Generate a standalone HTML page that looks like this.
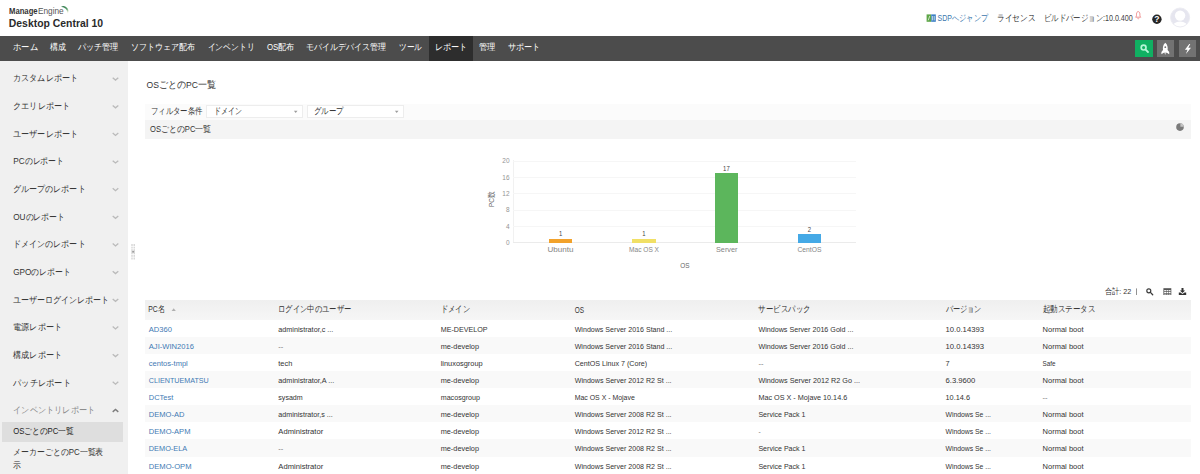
<!DOCTYPE html>
<html lang="ja"><head><meta charset="utf-8"><title>Desktop Central 10</title>
<style>
*{box-sizing:border-box;margin:0;padding:0}
html,body{width:1200px;height:474px;overflow:hidden;background:#fff}
body{font-family:"Liberation Sans",sans-serif;position:relative}
.b{position:absolute}
svg text{font-family:"Liberation Sans",sans-serif;white-space:pre}
</style></head><body>
<!-- nav bar -->
<div class="b" style="left:0;top:36px;width:1200px;height:24.7px;background:#4c4c4c"></div>
<div class="b" style="left:429px;top:36px;width:44px;height:24.7px;background:#2d2d2d"></div>
<div class="b" style="left:1135px;top:40px;width:18px;height:17px;background:#10b062"></div>
<div class="b" style="left:1157px;top:40px;width:17px;height:17px;background:#727272"></div>
<div class="b" style="left:1179px;top:40px;width:17px;height:17px;background:#727272"></div>
<!-- sidebar -->
<div class="b" style="left:0;top:60.7px;width:128px;height:414px;background:#f0f0f0"></div>
<div class="b" style="left:2px;top:422px;width:121px;height:20px;background:#dedede"></div>
<!-- filter + section bars -->
<div class="b" style="left:145px;top:104px;width:1046px;height:16px;background:#fbfbfb"></div>
<div class="b" style="left:206px;top:104.6px;width:97px;height:13.8px;background:#fff;border:1px solid #ededed"></div>
<div class="b" style="left:307px;top:104.6px;width:97px;height:13.8px;background:#fff;border:1px solid #ededed"></div>
<div class="b" style="left:145px;top:120px;width:1046px;height:19px;background:#f4f4f4"></div>
<!-- table header -->
<div class="b" style="left:145px;top:300px;width:1046px;height:20.2px;background:linear-gradient(#efefef,#f6f6f6)"></div>
<div style="position:absolute;left:145px;top:336.6px;width:1046px;height:17.2px;background:#f9f9f9"></div><div style="position:absolute;left:145px;top:370.9px;width:1046px;height:17.2px;background:#f9f9f9"></div><div style="position:absolute;left:145px;top:405.1px;width:1046px;height:17.2px;background:#f9f9f9"></div><div style="position:absolute;left:145px;top:439.4px;width:1046px;height:17.2px;background:#f9f9f9"></div>
<svg class="b" style="left:0;top:0" width="1200" height="474" viewBox="0 0 1200 474">
<g shape-rendering="crispEdges"><line x1="513.5" x2="513.5" y1="160" y2="243" stroke="#f1f1f1" stroke-width="1"/><line x1="513" x2="856" y1="242.6" y2="242.6" stroke="#ebebeb" stroke-width="1"/><line x1="513" x2="856" y1="226.3" y2="226.3" stroke="#f6f6f6" stroke-width="1"/><line x1="513" x2="856" y1="210.0" y2="210.0" stroke="#f6f6f6" stroke-width="1"/><line x1="513" x2="856" y1="193.6" y2="193.6" stroke="#f6f6f6" stroke-width="1"/><line x1="513" x2="856" y1="177.3" y2="177.3" stroke="#f6f6f6" stroke-width="1"/><line x1="513" x2="856" y1="161.0" y2="161.0" stroke="#f6f6f6" stroke-width="1"/><rect x="549.1" y="238.5" width="22.8" height="4.1" fill="#f2a22c"/><rect x="632.3" y="238.5" width="23.3" height="4.1" fill="#f1e066"/><rect x="715.1" y="173.2" width="22.5" height="69.4" fill="#5cb65c"/><rect x="798.0" y="234.4" width="22.7" height="8.2" fill="#45a9e6"/></g>
<path d="M112.7 77.7 L115.5 80.1 L118.3 77.7" fill="none" stroke="#bababa" stroke-width="1.3"/><path d="M112.7 105.4 L115.5 107.8 L118.3 105.4" fill="none" stroke="#bababa" stroke-width="1.3"/><path d="M112.7 133.0 L115.5 135.4 L118.3 133.0" fill="none" stroke="#bababa" stroke-width="1.3"/><path d="M112.7 160.7 L115.5 163.0 L118.3 160.7" fill="none" stroke="#bababa" stroke-width="1.3"/><path d="M112.7 188.3 L115.5 190.7 L118.3 188.3" fill="none" stroke="#bababa" stroke-width="1.3"/><path d="M112.7 216.0 L115.5 218.3 L118.3 216.0" fill="none" stroke="#bababa" stroke-width="1.3"/><path d="M112.7 243.6 L115.5 246.0 L118.3 243.6" fill="none" stroke="#bababa" stroke-width="1.3"/><path d="M112.7 271.2 L115.5 273.6 L118.3 271.2" fill="none" stroke="#bababa" stroke-width="1.3"/><path d="M112.7 298.9 L115.5 301.3 L118.3 298.9" fill="none" stroke="#bababa" stroke-width="1.3"/><path d="M112.7 326.6 L115.5 328.9 L118.3 326.6" fill="none" stroke="#bababa" stroke-width="1.3"/><path d="M112.7 354.2 L115.5 356.6 L118.3 354.2" fill="none" stroke="#bababa" stroke-width="1.3"/><path d="M112.7 381.8 L115.5 384.2 L118.3 381.8" fill="none" stroke="#bababa" stroke-width="1.3"/><path d="M112.7 411.9 L115.5 409.5 L118.3 411.9" fill="none" stroke="#7d7d7d" stroke-width="1.4"/>
<defs>
<linearGradient id="lg" x1="0" y1="0" x2="0.7" y2="1"><stop offset="0" stop-color="#2f7549"/><stop offset="0.55" stop-color="#4f9766"/><stop offset="0.85" stop-color="#b7d3b0"/><stop offset="1" stop-color="#efeed8"/></linearGradient>
<clipPath id="av"><circle cx="1180.1" cy="17.5" r="9.5"/></clipPath>
</defs>
<!-- logo arc -->
<path transform="translate(0.2,0.8)" d="M60.85 5.99 A5 5 0 0 1 67.61 12.75 A8.0 8.0 0 0 0 60.85 5.99 Z" fill="url(#lg)"/>
<!-- SDP icon -->
<rect x="926.6" y="14.4" width="4.6" height="7.4" fill="#5ea648"/><rect x="931.2" y="14.4" width="4.6" height="7.4" fill="#3b7fc6"/>
<path d="M928.2 20.3 L929.8 15.9 M932.4 16 v4.4 M934.2 16 v4.4" stroke="#e8f1e4" stroke-width="0.8" fill="none"/>
<!-- bell -->
<path d="M1135.6 17.2 h5.2 c-0.9 -0.8 -0.9 -1.6 -0.9 -3 c0 -1.6 -0.7 -2.6 -1.7 -2.6 c-1 0 -1.7 1 -1.7 2.6 c0 1.4 0 2.2 -0.9 3 z M1137.5 18.3 a0.8 0.8 0 0 0 1.5 0" fill="none" stroke="#ea7b7b" stroke-width="0.8"/>
<!-- help -->
<circle cx="1156.9" cy="19.3" r="4.7" fill="#262626"/>
<text x="1156.9" y="22.4" font-size="8.6" font-weight="bold" fill="#fff" text-anchor="middle">?</text>
<!-- avatar -->
<circle cx="1180.1" cy="17.5" r="9.5" fill="#e6e6ef"/>
<g clip-path="url(#av)"><circle cx="1180.1" cy="15.6" r="5.2" fill="#fff"/><ellipse cx="1180.1" cy="27.4" rx="8" ry="6" fill="#fff"/></g>
<circle cx="1180.1" cy="17.5" r="9.5" fill="none" stroke="#ececf2" stroke-width="1"/>
<!-- nav search -->
<circle cx="1143.6" cy="47.6" r="2.4" fill="none" stroke="#b4f5d6" stroke-width="1.7"/><path d="M1145.6 49.6 L1148 52" stroke="#b4f5d6" stroke-width="1.8" stroke-linecap="round"/>
<!-- rocket -->
<path d="M1165.3 42.8 C1167.6 44.6 1168 47.6 1167.6 50 L1169.2 52 L1169.2 54.2 L1166.9 52.8 L1163.7 52.8 L1161.4 54.2 L1161.4 52 L1163 50 C1162.6 47.6 1163 44.6 1165.3 42.8 Z" fill="#fff"/>
<circle cx="1165.3" cy="47.2" r="0.9" fill="#727272"/>
<path d="M1164.4 53.2 h1.8 l-0.9 1.6 z" fill="#ddd"/>
<!-- bolt -->
<path d="M1189.3 44.1 L1184.9 49.7 L1187.5 49.7 L1185.9 54 L1191 47.7 L1188.3 47.7 L1190.3 44.1 Z" fill="#fff"/>
<!-- dropdown arrows -->
<path d="M293.9 110.8 h3.6 l-1.8 2.1 z" fill="#9c9c9c"/><path d="M394.9 110.8 h3.6 l-1.8 2.1 z" fill="#9c9c9c"/>
<!-- pie icon -->
<circle cx="1180" cy="127.1" r="3.8" fill="#7a7a7a"/><path d="M1180.4 126.7 L1180.4 123.3 A3.6 3.6 0 0 1 1183.8 126.7 Z" fill="#c4c4c4"/>
<!-- sidebar grip -->
<g fill="#cfcfcf"><rect x="131.4" y="244" width="1.2" height="15.5"/><rect x="133.6" y="244" width="1.2" height="15.5"/></g>
<g fill="#fff"><rect x="131" y="246" width="4.2" height="0.7"/><rect x="131" y="248.5" width="4.2" height="0.7"/><rect x="131" y="254.3" width="4.2" height="0.7"/><rect x="131" y="256.8" width="4.2" height="0.7"/></g>
<circle cx="133.1" cy="251.8" r="1" fill="#9a9a9a"/>
<!-- sort arrow -->
<path d="M171.6 311 h4.2 l-2.1 -2.7 z" fill="#b0b0b0"/>
<rect x="1136" y="288.4" width="0.8" height="6.6" fill="#777"/>
<!-- toolbar search -->
<circle cx="1148.8" cy="290.8" r="2" fill="none" stroke="#3a3a3a" stroke-width="1.15"/><path d="M1150.4 292.4 L1152.7 294.8" stroke="#3a3a3a" stroke-width="1.3" stroke-linecap="round"/>
<!-- toolbar table -->
<rect x="1163.4" y="288.2" width="7.9" height="6.8" fill="#555"/>
<g fill="#fff"><rect x="1164.2" y="290.1" width="1.8" height="1.1"/><rect x="1166.5" y="290.1" width="1.8" height="1.1"/><rect x="1168.8" y="290.1" width="1.8" height="1.1"/>
<rect x="1164.2" y="291.9" width="1.8" height="1.1"/><rect x="1166.5" y="291.9" width="1.8" height="1.1"/><rect x="1168.8" y="291.9" width="1.8" height="1.1"/>
<rect x="1164.2" y="293.7" width="1.8" height="0.8"/><rect x="1166.5" y="293.7" width="1.8" height="0.8"/><rect x="1168.8" y="293.7" width="1.8" height="0.8"/></g>
<!-- toolbar download -->
<path d="M1181.5 287.9 h2 v2.6 h1.6 l-2.6 2.6 l-2.6 -2.6 h1.6 z" fill="#333"/>
<path d="M1178.8 292.4 h1.6 l2.1 1.5 l2.1 -1.5 h1.6 v2.7 h-7.4 z" fill="#333"/>

<text x="9.0" y="13.7" font-size="8.3" fill="#333" font-weight="bold" textLength="28.6" lengthAdjust="spacingAndGlyphs">Manage</text>
<text x="37.9" y="13.7" font-size="8.3" fill="#555" textLength="25.8" lengthAdjust="spacingAndGlyphs">Engine</text>
<text x="8.8" y="26.6" font-size="10.2" fill="#2a2a2a" font-weight="bold" textLength="94.3" lengthAdjust="spacingAndGlyphs">Desktop Central 10</text>
<text x="937.6" y="21.1" font-size="8.7" fill="#3a76ad" textLength="50.5" lengthAdjust="spacingAndGlyphs">SDPへジャンプ</text>
<text x="997.0" y="20.8" font-size="9.0" fill="#2b2b2b" textLength="38.5" lengthAdjust="spacingAndGlyphs">ライセンス</text>
<text x="1043.7" y="21.1" font-size="8.7" fill="#444" textLength="89.1" lengthAdjust="spacingAndGlyphs">ビルドバージョン:10.0.400</text>
<text x="13.0" y="50.0" font-size="8.7" fill="#fff" textLength="25.0" lengthAdjust="spacingAndGlyphs">ホーム</text>
<text x="49.5" y="50.0" font-size="8.7" fill="#fff" textLength="16.0" lengthAdjust="spacingAndGlyphs">構成</text>
<text x="78.0" y="50.0" font-size="8.7" fill="#fff" textLength="40.5" lengthAdjust="spacingAndGlyphs">パッチ管理</text>
<text x="131.0" y="50.0" font-size="8.7" fill="#fff" textLength="64.0" lengthAdjust="spacingAndGlyphs">ソフトウェア配布</text>
<text x="207.5" y="50.0" font-size="8.7" fill="#fff" textLength="47.0" lengthAdjust="spacingAndGlyphs">インベントリ</text>
<text x="267.0" y="50.0" font-size="8.7" fill="#fff" textLength="27.5" lengthAdjust="spacingAndGlyphs">OS配布</text>
<text x="306.0" y="50.0" font-size="8.7" fill="#fff" textLength="80.0" lengthAdjust="spacingAndGlyphs">モバイルデバイス管理</text>
<text x="399.0" y="50.0" font-size="8.7" fill="#fff" textLength="23.0" lengthAdjust="spacingAndGlyphs">ツール</text>
<text x="435.0" y="50.0" font-size="8.7" fill="#fff" textLength="32.5" lengthAdjust="spacingAndGlyphs">レポート</text>
<text x="479.0" y="50.0" font-size="8.7" fill="#fff" textLength="16.5" lengthAdjust="spacingAndGlyphs">管理</text>
<text x="507.5" y="50.0" font-size="8.7" fill="#fff" textLength="32.5" lengthAdjust="spacingAndGlyphs">サポート</text>
<text x="13.2" y="81.4" font-size="9.4" fill="#333" textLength="64.8" lengthAdjust="spacingAndGlyphs">カスタムレポート</text>
<text x="13.2" y="109.1" font-size="9.4" fill="#333" textLength="56.8" lengthAdjust="spacingAndGlyphs">クエリレポート</text>
<text x="13.2" y="136.7" font-size="9.4" fill="#333" textLength="64.8" lengthAdjust="spacingAndGlyphs">ユーザーレポート</text>
<text x="13.2" y="164.4" font-size="9.4" fill="#333" textLength="50.9" lengthAdjust="spacingAndGlyphs">PCのレポート</text>
<text x="13.2" y="192.0" font-size="9.4" fill="#333" textLength="72.4" lengthAdjust="spacingAndGlyphs">グループのレポート</text>
<text x="13.2" y="219.7" font-size="9.4" fill="#333" textLength="51.8" lengthAdjust="spacingAndGlyphs">OUのレポート</text>
<text x="13.2" y="247.3" font-size="9.4" fill="#333" textLength="72.4" lengthAdjust="spacingAndGlyphs">ドメインのレポート</text>
<text x="13.2" y="275.0" font-size="9.4" fill="#333" textLength="57.4" lengthAdjust="spacingAndGlyphs">GPOのレポート</text>
<text x="13.2" y="302.6" font-size="9.4" fill="#333" textLength="96.1" lengthAdjust="spacingAndGlyphs">ユーザーログインレポート</text>
<text x="13.2" y="330.3" font-size="9.4" fill="#333" textLength="48.8" lengthAdjust="spacingAndGlyphs">電源レポート</text>
<text x="13.2" y="357.9" font-size="9.4" fill="#333" textLength="48.8" lengthAdjust="spacingAndGlyphs">構成レポート</text>
<text x="13.2" y="385.6" font-size="9.4" fill="#333" textLength="57.7" lengthAdjust="spacingAndGlyphs">パッチレポート</text>
<text x="13.2" y="413.2" font-size="9.4" fill="#8a8a8a" textLength="81.9" lengthAdjust="spacingAndGlyphs">インベントリレポート</text>
<text x="13.3" y="434.3" font-size="9.0" fill="#222" textLength="60.5" lengthAdjust="spacingAndGlyphs">OSごとのPC一覧</text>
<text x="13.3" y="454.9" font-size="9.0" fill="#333" textLength="90.1" lengthAdjust="spacingAndGlyphs">メーカーごとのPC一覧表</text>
<text x="13.3" y="467.7" font-size="9.0" fill="#333" textLength="7.9" lengthAdjust="spacingAndGlyphs">示</text>
<text x="146.6" y="88.3" font-size="9.5" fill="#333" textLength="69.4" lengthAdjust="spacingAndGlyphs">OSごとのPC一覧</text>
<text x="150.8" y="114.3" font-size="9.0" fill="#333" textLength="51.7" lengthAdjust="spacingAndGlyphs">フィルター条件</text>
<text x="213.9" y="114.3" font-size="9.0" fill="#333" textLength="28.0" lengthAdjust="spacingAndGlyphs">ドメイン</text>
<text x="313.8" y="114.3" font-size="9.0" fill="#333" textLength="29.8" lengthAdjust="spacingAndGlyphs">グループ</text>
<text x="150.0" y="131.6" font-size="8.6" fill="#333" textLength="61.3" lengthAdjust="spacingAndGlyphs">OSごとのPC一覧</text>
<text x="505.9" y="244.9" font-size="6.4" fill="#939393" textLength="3.6" lengthAdjust="spacingAndGlyphs">0</text>
<text x="505.9" y="228.6" font-size="6.4" fill="#939393" textLength="3.6" lengthAdjust="spacingAndGlyphs">4</text>
<text x="505.9" y="212.3" font-size="6.4" fill="#939393" textLength="3.6" lengthAdjust="spacingAndGlyphs">8</text>
<text x="502.3" y="195.9" font-size="6.4" fill="#939393" textLength="7.2" lengthAdjust="spacingAndGlyphs">12</text>
<text x="502.3" y="179.6" font-size="6.4" fill="#939393" textLength="7.2" lengthAdjust="spacingAndGlyphs">16</text>
<text x="502.3" y="163.3" font-size="6.4" fill="#939393" textLength="7.2" lengthAdjust="spacingAndGlyphs">20</text>
<text x="558.9" y="236.2" font-size="6.4" fill="#444" textLength="3.3" lengthAdjust="spacingAndGlyphs">1</text>
<text x="547.5" y="252.0" font-size="6.6" fill="#858585" textLength="26.0" lengthAdjust="spacingAndGlyphs">Ubuntu</text>
<text x="642.3" y="236.2" font-size="6.4" fill="#444" textLength="3.3" lengthAdjust="spacingAndGlyphs">1</text>
<text x="629.0" y="252.0" font-size="6.6" fill="#858585" textLength="30.0" lengthAdjust="spacingAndGlyphs">Mac OS X</text>
<text x="723.1" y="170.9" font-size="6.4" fill="#444" textLength="6.6" lengthAdjust="spacingAndGlyphs">17</text>
<text x="716.0" y="252.0" font-size="6.6" fill="#858585" textLength="21.5" lengthAdjust="spacingAndGlyphs">Server</text>
<text x="807.7" y="232.1" font-size="6.4" fill="#444" textLength="3.3" lengthAdjust="spacingAndGlyphs">2</text>
<text x="797.5" y="252.0" font-size="6.6" fill="#858585" textLength="24.0" lengthAdjust="spacingAndGlyphs">CentOS</text>
<text x="680.3" y="268.0" font-size="7.6" fill="#666" textLength="9.3" lengthAdjust="spacingAndGlyphs">OS</text>
<text transform="translate(494.3,199.3) rotate(-90)" text-anchor="middle" font-size="7.8" fill="#666" textLength="15.5" lengthAdjust="spacingAndGlyphs">PC数</text>
<text x="1104.6" y="293.7" font-size="7.9" fill="#333" textLength="26.6" lengthAdjust="spacingAndGlyphs">合計: 22</text>
<text x="148.3" y="312.4" font-size="8.6" fill="#333" textLength="16.7" lengthAdjust="spacingAndGlyphs">PC名</text>
<text x="278.0" y="312.4" font-size="8.6" fill="#333" textLength="73.3" lengthAdjust="spacingAndGlyphs">ログイン中のユーザー</text>
<text x="440.7" y="312.4" font-size="8.6" fill="#333" textLength="29.3" lengthAdjust="spacingAndGlyphs">ドメイン</text>
<text x="574.7" y="312.9" font-size="8.6" fill="#333" textLength="9.3" lengthAdjust="spacingAndGlyphs">OS</text>
<text x="758.4" y="312.4" font-size="8.6" fill="#333" textLength="52.0" lengthAdjust="spacingAndGlyphs">サービスパック</text>
<text x="945.5" y="312.4" font-size="8.6" fill="#333" textLength="36.0" lengthAdjust="spacingAndGlyphs">バージョン</text>
<text x="1042.6" y="312.4" font-size="8.6" fill="#333" textLength="52.6" lengthAdjust="spacingAndGlyphs">起動ステータス</text>
<text x="148.8" y="331.7" font-size="7.7" fill="#3f7ab4" textLength="23.2" lengthAdjust="spacingAndGlyphs">AD360</text>
<text x="278.3" y="331.7" font-size="7.7" fill="#333" textLength="55.0" lengthAdjust="spacingAndGlyphs">administrator,c ...</text>
<text x="440.7" y="331.7" font-size="7.7" fill="#333" textLength="46.9" lengthAdjust="spacingAndGlyphs">ME-DEVELOP</text>
<text x="574.7" y="331.7" font-size="7.7" fill="#333" textLength="97.6" lengthAdjust="spacingAndGlyphs">Windows Server 2016 Stand ...</text>
<text x="758.4" y="331.7" font-size="7.7" fill="#333" textLength="95.0" lengthAdjust="spacingAndGlyphs">Windows Server 2016 Gold ...</text>
<text x="945.5" y="331.7" font-size="7.7" fill="#333" textLength="38.5" lengthAdjust="spacingAndGlyphs">10.0.14393</text>
<text x="1042.6" y="331.7" font-size="7.7" fill="#333" textLength="40.9" lengthAdjust="spacingAndGlyphs">Normal boot</text>
<text x="148.8" y="348.8" font-size="7.7" fill="#3f7ab4" textLength="45.2" lengthAdjust="spacingAndGlyphs">AJI-WIN2016</text>
<text x="278.3" y="348.8" font-size="7.7" fill="#777" textLength="5.0" lengthAdjust="spacingAndGlyphs">--</text>
<text x="440.7" y="348.8" font-size="7.7" fill="#333" textLength="38.3" lengthAdjust="spacingAndGlyphs">me-develop</text>
<text x="574.7" y="348.8" font-size="7.7" fill="#333" textLength="97.6" lengthAdjust="spacingAndGlyphs">Windows Server 2016 Stand ...</text>
<text x="758.4" y="348.8" font-size="7.7" fill="#333" textLength="95.0" lengthAdjust="spacingAndGlyphs">Windows Server 2016 Gold ...</text>
<text x="945.5" y="348.8" font-size="7.7" fill="#333" textLength="38.5" lengthAdjust="spacingAndGlyphs">10.0.14393</text>
<text x="1042.6" y="348.8" font-size="7.7" fill="#333" textLength="40.9" lengthAdjust="spacingAndGlyphs">Normal boot</text>
<text x="148.8" y="365.9" font-size="7.7" fill="#3f7ab4" textLength="39.0" lengthAdjust="spacingAndGlyphs">centos-tmpl</text>
<text x="278.3" y="365.9" font-size="7.7" fill="#333" textLength="14.0" lengthAdjust="spacingAndGlyphs">tech</text>
<text x="440.7" y="365.9" font-size="7.7" fill="#333" textLength="42.0" lengthAdjust="spacingAndGlyphs">linuxosgroup</text>
<text x="574.7" y="365.9" font-size="7.7" fill="#333" textLength="72.5" lengthAdjust="spacingAndGlyphs">CentOS Linux 7 (Core)</text>
<text x="758.4" y="365.9" font-size="7.7" fill="#777" textLength="5.0" lengthAdjust="spacingAndGlyphs">--</text>
<text x="945.5" y="365.9" font-size="7.7" fill="#333" textLength="4.1" lengthAdjust="spacingAndGlyphs">7</text>
<text x="1042.6" y="365.9" font-size="7.7" fill="#333" textLength="12.9" lengthAdjust="spacingAndGlyphs">Safe</text>
<text x="148.8" y="383.0" font-size="7.7" fill="#3f7ab4" textLength="60.0" lengthAdjust="spacingAndGlyphs">CLIENTUEMATSU</text>
<text x="278.3" y="383.0" font-size="7.7" fill="#333" textLength="56.0" lengthAdjust="spacingAndGlyphs">administrator,A ...</text>
<text x="440.7" y="383.0" font-size="7.7" fill="#333" textLength="38.3" lengthAdjust="spacingAndGlyphs">me-develop</text>
<text x="574.7" y="383.0" font-size="7.7" fill="#333" textLength="96.9" lengthAdjust="spacingAndGlyphs">Windows Server 2012 R2 St ...</text>
<text x="758.4" y="383.0" font-size="7.7" fill="#333" textLength="101.6" lengthAdjust="spacingAndGlyphs">Windows Server 2012 R2 Go ...</text>
<text x="945.5" y="383.0" font-size="7.7" fill="#333" textLength="29.9" lengthAdjust="spacingAndGlyphs">6.3.9600</text>
<text x="1042.6" y="383.0" font-size="7.7" fill="#333" textLength="40.9" lengthAdjust="spacingAndGlyphs">Normal boot</text>
<text x="148.8" y="400.1" font-size="7.7" fill="#3f7ab4" textLength="24.4" lengthAdjust="spacingAndGlyphs">DCTest</text>
<text x="278.3" y="400.1" font-size="7.7" fill="#333" textLength="24.4" lengthAdjust="spacingAndGlyphs">sysadm</text>
<text x="440.7" y="400.1" font-size="7.7" fill="#333" textLength="39.3" lengthAdjust="spacingAndGlyphs">macosgroup</text>
<text x="574.7" y="400.1" font-size="7.7" fill="#333" textLength="60.1" lengthAdjust="spacingAndGlyphs">Mac OS X - Mojave</text>
<text x="758.4" y="400.1" font-size="7.7" fill="#333" textLength="88.8" lengthAdjust="spacingAndGlyphs">Mac OS X - Mojave 10.14.6</text>
<text x="945.5" y="400.1" font-size="7.7" fill="#333" textLength="24.5" lengthAdjust="spacingAndGlyphs">10.14.6</text>
<text x="1042.6" y="400.1" font-size="7.7" fill="#777" textLength="5.0" lengthAdjust="spacingAndGlyphs">--</text>
<text x="148.8" y="417.2" font-size="7.7" fill="#3f7ab4" textLength="35.7" lengthAdjust="spacingAndGlyphs">DEMO-AD</text>
<text x="278.3" y="417.2" font-size="7.7" fill="#333" textLength="54.4" lengthAdjust="spacingAndGlyphs">administrator,s ...</text>
<text x="440.7" y="417.2" font-size="7.7" fill="#333" textLength="38.3" lengthAdjust="spacingAndGlyphs">me-develop</text>
<text x="574.7" y="417.2" font-size="7.7" fill="#333" textLength="96.9" lengthAdjust="spacingAndGlyphs">Windows Server 2008 R2 St ...</text>
<text x="758.4" y="417.2" font-size="7.7" fill="#333" textLength="47.1" lengthAdjust="spacingAndGlyphs">Service Pack 1</text>
<text x="945.5" y="417.2" font-size="7.7" fill="#333" textLength="45.5" lengthAdjust="spacingAndGlyphs">Windows Se ...</text>
<text x="1042.6" y="417.2" font-size="7.7" fill="#333" textLength="40.9" lengthAdjust="spacingAndGlyphs">Normal boot</text>
<text x="148.8" y="434.3" font-size="7.7" fill="#3f7ab4" textLength="41.7" lengthAdjust="spacingAndGlyphs">DEMO-APM</text>
<text x="278.3" y="434.3" font-size="7.7" fill="#333" textLength="45.0" lengthAdjust="spacingAndGlyphs">Administrator</text>
<text x="440.7" y="434.3" font-size="7.7" fill="#333" textLength="38.3" lengthAdjust="spacingAndGlyphs">me-develop</text>
<text x="574.7" y="434.3" font-size="7.7" fill="#333" textLength="96.9" lengthAdjust="spacingAndGlyphs">Windows Server 2012 R2 St ...</text>
<text x="758.4" y="434.3" font-size="7.7" fill="#777" textLength="2.2" lengthAdjust="spacingAndGlyphs">-</text>
<text x="945.5" y="434.3" font-size="7.7" fill="#333" textLength="45.5" lengthAdjust="spacingAndGlyphs">Windows Se ...</text>
<text x="1042.6" y="434.3" font-size="7.7" fill="#333" textLength="40.9" lengthAdjust="spacingAndGlyphs">Normal boot</text>
<text x="148.8" y="451.4" font-size="7.7" fill="#3f7ab4" textLength="38.4" lengthAdjust="spacingAndGlyphs">DEMO-ELA</text>
<text x="278.3" y="451.4" font-size="7.7" fill="#777" textLength="5.0" lengthAdjust="spacingAndGlyphs">--</text>
<text x="440.7" y="451.4" font-size="7.7" fill="#333" textLength="38.3" lengthAdjust="spacingAndGlyphs">me-develop</text>
<text x="574.7" y="451.4" font-size="7.7" fill="#333" textLength="96.9" lengthAdjust="spacingAndGlyphs">Windows Server 2008 R2 St ...</text>
<text x="758.4" y="451.4" font-size="7.7" fill="#333" textLength="47.1" lengthAdjust="spacingAndGlyphs">Service Pack 1</text>
<text x="945.5" y="451.4" font-size="7.7" fill="#333" textLength="45.5" lengthAdjust="spacingAndGlyphs">Windows Se ...</text>
<text x="1042.6" y="451.4" font-size="7.7" fill="#333" textLength="40.9" lengthAdjust="spacingAndGlyphs">Normal boot</text>
<text x="148.8" y="468.5" font-size="7.7" fill="#3f7ab4" textLength="42.7" lengthAdjust="spacingAndGlyphs">DEMO-OPM</text>
<text x="278.3" y="468.5" font-size="7.7" fill="#333" textLength="45.0" lengthAdjust="spacingAndGlyphs">Administrator</text>
<text x="440.7" y="468.5" font-size="7.7" fill="#333" textLength="38.3" lengthAdjust="spacingAndGlyphs">me-develop</text>
<text x="574.7" y="468.5" font-size="7.7" fill="#333" textLength="96.9" lengthAdjust="spacingAndGlyphs">Windows Server 2008 R2 St ...</text>
<text x="758.4" y="468.5" font-size="7.7" fill="#333" textLength="47.1" lengthAdjust="spacingAndGlyphs">Service Pack 1</text>
<text x="945.5" y="468.5" font-size="7.7" fill="#333" textLength="45.5" lengthAdjust="spacingAndGlyphs">Windows Se ...</text>
<text x="1042.6" y="468.5" font-size="7.7" fill="#333" textLength="40.9" lengthAdjust="spacingAndGlyphs">Normal boot</text>
</svg>
</body></html>
